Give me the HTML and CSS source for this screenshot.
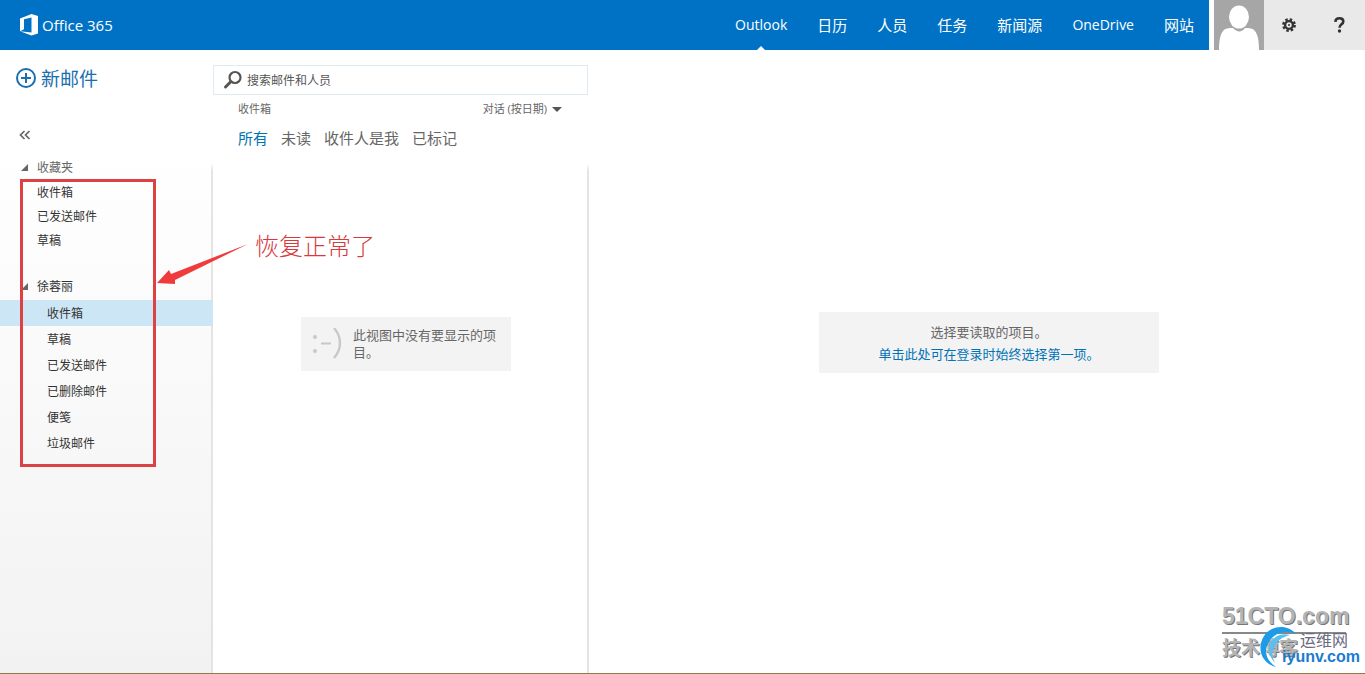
FILE: index.html
```
<!DOCTYPE html>
<html lang="zh-CN">
<head>
    <meta charset="UTF-8" />
    <meta name="viewport" content="width=device-width, initial-scale=1.0"/>
    <title>Outlook - Office 365</title>
    <link rel="stylesheet" href="styles.css">
</head>
<body>
<header class="topbar">
    <div class="topbar-main">
        <a class="brand" href="#">
            <svg class="brand-icon" width="18" height="22" viewBox="0 0 18 22">
                <path fill="#fff" fill-rule="evenodd" d="M0 4.500 11.500 0 18 2v17.500L11.500 21.500 0 17.200l11.500 1.300V3.600L4 5.300v9.900L0 17.200z"/>
            </svg>
            <span>Office 365</span>
        </a>
        <nav class="apps">
            <a class="latin active" href="#">Outlook</a>
            <a href="#">日历</a>
            <a href="#">人员</a>
            <a href="#">任务</a>
            <a href="#">新闻源</a>
            <a class="latin" href="#">OneDrive</a>
            <a href="#">网站</a>
        </nav>
    </div>
    <button class="avatar" aria-label="用户">
        <svg width="50" height="50" viewBox="0 0 50 50">
            <path fill="#fff" d="M5 50c0-12 2-20 8-21.500 2-.5 4-.5 6-.5 4 4.500 9 4.500 12 0 2 0 4 0 6 .5 6 1.500 8 9.500 8 21.500z"/>
            <ellipse cx="25" cy="17" rx="10" ry="11.500" fill="#fff"/>
        </svg>
    </button>
    <div class="tools">
        <button aria-label="设置">
            <svg width="14" height="14" viewBox="0 0 14 14">
                <circle cx="7" cy="7" r="5.700" fill="none" stroke="#333" stroke-width="2.400" stroke-dasharray="2.500 1.977"/>
                <circle cx="7" cy="7" r="3.900" fill="none" stroke="#333" stroke-width="2.400"/>
                <circle cx="7" cy="7" r="1" fill="#333"/>
            </svg>
        </button>
        <button aria-label="帮助">
            <svg width="11" height="16" viewBox="0 0 11 16">
                <path fill="none" stroke="#333" stroke-width="2.600" d="M1.300 4.800C1.500 2.300 3 1.300 5.300 1.300c2.500 0 4 1.200 4 3.100 0 3-3.800 2.800-3.800 6.300"/>
                <circle cx="5.500" cy="14" r="1.700" fill="#333"/>
            </svg>
        </button>
    </div>
</header>

<div class="layout">
    <aside class="sidebar">
        <button class="new-mail">
            <svg width="20" height="20" viewBox="0 0 20 20" fill="none" stroke="#1a6fb0" stroke-width="2">
                <circle cx="10" cy="10" r="9"/>
                <path d="M10 5v10M5 10h10"/>
            </svg>
            <span>新邮件</span>
        </button>
        <button class="collapse" aria-label="折叠">
            <svg width="12" height="10" viewBox="0 0 12 10" fill="none" stroke="#666" stroke-width="1.700">
                <path d="M5.500 1 1.500 5l4 4M10.500 1l-4 4 4 4"/>
            </svg>
        </button>
        <nav class="folders">
            <h2 class="group">收藏夹</h2>
            <ul class="favorites">
                <li><a href="#">收件箱</a></li>
                <li><a href="#">已发送邮件</a></li>
                <li><a href="#">草稿</a></li>
            </ul>
            <h2 class="group owner">徐蓉丽</h2>
            <ul class="mailbox">
                <li><a class="selected" href="#">收件箱</a></li>
                <li><a href="#">草稿</a></li>
                <li><a href="#">已发送邮件</a></li>
                <li><a href="#">已删除邮件</a></li>
                <li><a href="#">便笺</a></li>
                <li><a href="#">垃圾邮件</a></li>
            </ul>
        </nav>
    </aside>

    <section class="list">
        <form class="search">
            <svg width="20" height="20" viewBox="0 0 20 20" fill="none" stroke="#555">
                <circle cx="12" cy="7.500" r="5.500" stroke-width="2.200"/>
                <path stroke-width="3" stroke-linecap="round" d="M7.500 12 2.500 17"/>
            </svg>
            <input type="text" placeholder="搜索邮件和人员" aria-label="搜索邮件和人员">
        </form>
        <div class="list-head">
            <span>收件箱</span>
            <button class="sort">对话 (按日期)</button>
        </div>
        <div class="filters">
            <button class="on">所有</button>
            <button>未读</button>
            <button>收件人是我</button>
            <button>已标记</button>
        </div>
        <div class="list-body">
            <div class="empty">
                <svg width="32" height="32" viewBox="0 0 32 32" fill="none" stroke="#c8c8c8">
                    <circle cx="5" cy="9" r="2" fill="#c8c8c8" stroke="none"/>
                    <circle cx="5" cy="23" r="2" fill="#c8c8c8" stroke="none"/>
                    <path stroke-width="2" d="M11 15.500h10"/>
                    <path stroke-width="2.400" d="M24 0c8 9 8 21 0 30"/>
                </svg>
                <p>此视图中没有要显示的项目。</p>
            </div>
        </div>
    </section>

    <main class="reading">
        <div class="hint">
            <p>选择要读取的项目。</p>
            <a href="#">单击此处可在登录时始终选择第一项。</a>
        </div>
    </main>
</div>

<!-- markup drawn over the page -->
<div class="mark-box"></div>
<svg class="mark-arrow" width="92" height="44" viewBox="0 0 92 44">
    <path fill="#ef3b3b" d="M0 40 12 27l2 4L91 1 18 37l0 4z"/>
</svg>
<div class="mark-text">恢复正常了</div>

<div class="watermark">
    <div class="wm-site">51CTO.com</div>
    <div class="wm-blog">技术博客</div>
</div>
<div class="iyunv">
    <svg width="40" height="42" viewBox="0 0 40 42">
        <path fill="#1b9be8" d="M37 8C29-2 12-1 5 10c-8 13-2 27 12 31-8-5-12-13-9-21C12 8 25 3 37 8z"/>
        <path fill="#57c0f5" d="M31 9C20 6 11 13 10 22c0 6 2 11 6 15-3-6-3-11-1-16 3-6 8-10 16-12z"/>
    </svg>
    <div class="iyunv-text">
        <div class="iyunv-cn">运维网</div>
        <div class="iyunv-en">iyunv.com</div>
    </div>
</div>
</body>
</html>
```
FILE: styles.css
```
* {
    box-sizing: border-box;
}

body {
    margin: 0;
    min-height: 100vh;
    display: flex;
    flex-direction: column;
    font-family: "Open Sans", "Noto Sans CJK SC", sans-serif;
    font-size: 12px;
    color: #333;
    background: #fff;
    border-bottom: 1px solid #8f7a4c;
}

a {
    color: inherit;
    text-decoration: none;
}

button {
    padding: 0;
    border: none;
    background: none;
    font: inherit;
    color: inherit;
    cursor: pointer;
}

h2, p, ul {
    margin: 0;
    padding: 0;
    list-style: none;
    font-weight: normal;
}

/* top bar */
.topbar {
    display: flex;
    height: 50px;
}

.topbar-main {
    flex: 1;
    display: flex;
    justify-content: space-between;
    margin-right: 5px;
    padding-left: 20px;
    background: #0072c6;
    color: #fff;
}

.brand {
    display: flex;
    align-items: center;
    gap: 4px;
    font-family: "Open Sans", sans-serif;
    font-size: 15px;
}

.apps {
    display: flex;
    font-size: 15px;
    line-height: 50px;
}

.apps a {
    padding: 0 15px;
}

.apps .latin {
    font-size: 14px;
}

.apps .active {
    position: relative;
}

.apps .active::after {
    content: "";
    position: absolute;
    left: 50%;
    bottom: 0;
    margin-left: -4px;
    border: 4px solid transparent;
    border-top: none;
    border-bottom-color: #fff;
}

.avatar {
    width: 50px;
    height: 50px;
    background: #a6a6a6;
}

.avatar svg, .tools svg {
    display: block;
    margin: 0 auto;
}

.tools {
    display: flex;
    width: 101px;
    background: #e9e9e9;
}

.tools button {
    flex: 1;
}

/* columns */
.layout {
    flex: 1;
    display: grid;
    grid-template-columns: 213px 376px 1fr;
}

.sidebar {
    display: flex;
    flex-direction: column;
    align-items: flex-start;
    background: linear-gradient(#fff 15%, #f2f2f2);
}

.new-mail {
    display: flex;
    align-items: center;
    gap: 5px;
    height: 30px;
    margin: 13px 0 0 16px;
    font-size: 19px;
    color: #1a6fb0;
}

.collapse {
    height: 40px;
    margin: 22px 0 0 19px;
}

.collapse svg {
    display: block;
}

.folders, .list-body {
    background: linear-gradient(transparent 8px, #e4e4e4 16px) right / 2px 100% no-repeat;
}

.folders {
    flex: 1;
    width: 100%;
}

.group {
    position: relative;
    padding-left: 37px;
    font-size: 12px;
    line-height: 26px;
    color: #666;
}

.group::before {
    content: "";
    position: absolute;
    left: 21px;
    top: 9px;
    border-left: 7px solid transparent;
    border-bottom: 7px solid #666;
}

.owner {
    margin-top: 21px;
    color: #333;
}

.favorites a {
    display: block;
    padding-left: 37px;
    line-height: 24px;
}

.mailbox a {
    display: block;
    padding: 1px 0 0 47px;
    line-height: 25px;
}

.mailbox .selected {
    background: #cde6f5;
}

/* message list */
.list {
    display: flex;
    flex-direction: column;
    color: #666;
}

.search {
    display: flex;
    align-items: center;
    gap: 4px;
    height: 30px;
    margin: 15px 1px 0 0;
    padding-left: 9px;
    border: 1px solid #dfebf0;
}

.search input {
    flex: 1;
    padding: 0;
    border: none;
    outline: none;
    background: none;
    font: inherit;
}

.search input::placeholder {
    color: #555;
    opacity: 1;
}

.list-head {
    display: flex;
    justify-content: space-between;
    padding: 0 27px 0 25px;
    font-size: 11px;
    line-height: 28px;
}

.sort {
    display: flex;
    align-items: center;
    gap: 5px;
}

.sort::after {
    content: "";
    border: 5px solid transparent;
    border-top-color: #555;
    border-bottom: none;
}

.filters {
    display: flex;
    gap: 13px;
    height: 32px;
    padding: 0 0 4px 25px;
    font-size: 15px;
}

.filters .on {
    color: #0072b6;
}

.list-body {
    flex: 1;
    padding: 162px 0 0 88px;
}

.empty {
    display: flex;
    align-items: center;
    gap: 11px;
    width: 210px;
    padding: 10px 9px;
    background: #f3f3f3;
    font-size: 13px;
    line-height: 17px;
}

.empty svg {
    flex: none;
}

.empty p {
    flex: 1;
}

/* reading pane */
.reading {
    padding: 262px 0 0 24px;
}

.hint {
    max-width: 340px;
    margin: 0 auto;
    padding: 9px 0 8px;
    background: #f3f3f3;
    font-size: 13px;
    line-height: 22px;
    text-align: center;
    color: #666;
}

.hint a {
    color: #0072b6;
}

/* markup over the page */
.mark-box {
    position: absolute;
    left: 20px;
    top: 179px;
    width: 136px;
    height: 288px;
    border: 3px solid #dc4244;
    pointer-events: none;
}

.mark-arrow {
    position: absolute;
    left: 157px;
    top: 243px;
}

.mark-text {
    position: absolute;
    left: 255px;
    top: 230px;
    font-family: "Noto Sans CJK SC", sans-serif;
    font-weight: 300;
    font-size: 24px;
    line-height: 30px;
    color: #d83a3c;
}

.watermark {
    position: absolute;
    right: 19px;
    bottom: 14px;
    width: 124px;
    font-weight: bold;
    color: #b4b4b4;
    text-shadow: 1px 1px 0 #777;
}

.wm-site {
    border-bottom: 2px solid #888;
    font-family: "Liberation Sans", sans-serif;
    font-size: 23px;
    line-height: 32px;
}

.wm-blog {
    font-family: "Noto Sans CJK SC", sans-serif;
    font-size: 19px;
    line-height: 26px;
}

.iyunv {
    position: absolute;
    right: 5px;
    bottom: 6px;
    display: flex;
}

.iyunv-text {
    margin-left: -17px;
}

.iyunv-cn {
    padding: 4px 0 0 18px;
    font-family: "Noto Sans CJK SC", sans-serif;
    font-size: 16px;
    line-height: 18px;
    color: #6a6a80;
}

.iyunv-en {
    font-family: "Liberation Sans", sans-serif;
    font-weight: bold;
    font-size: 16px;
    line-height: 18px;
    color: #1c7cd0;
}
```
